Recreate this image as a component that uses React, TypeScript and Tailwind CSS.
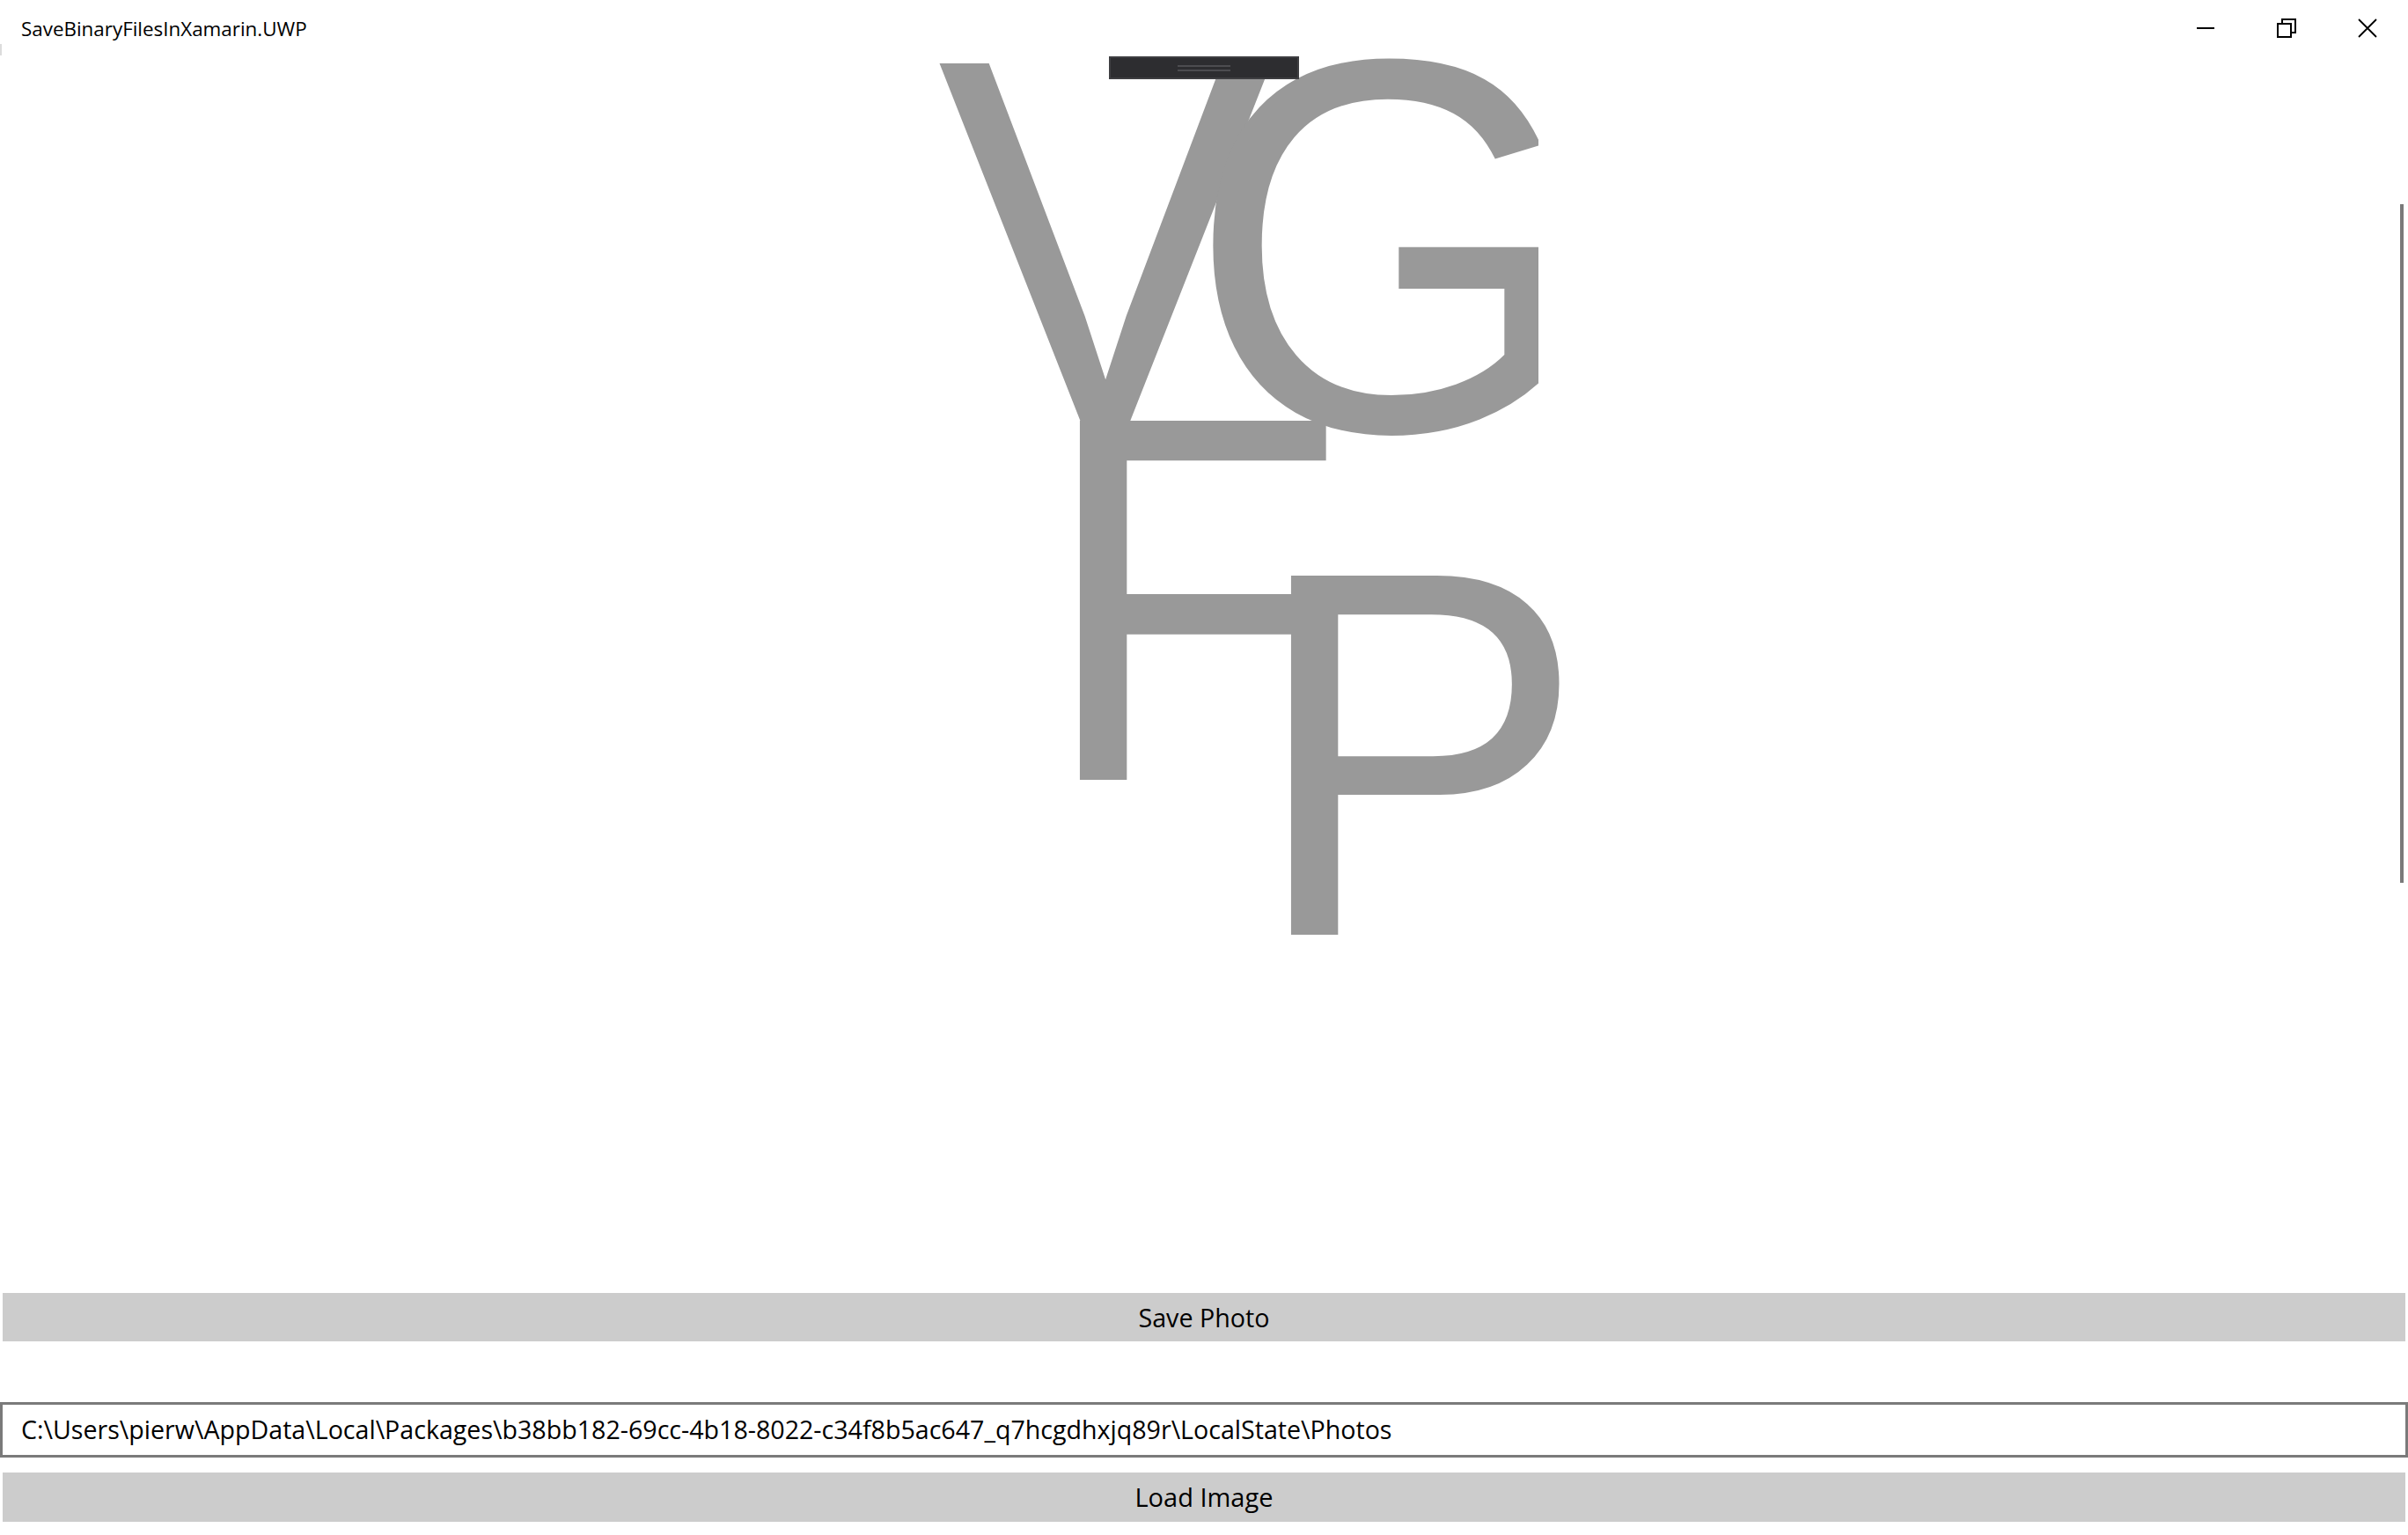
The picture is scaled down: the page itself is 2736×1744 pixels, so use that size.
import React from "react";

const path =
  "C:\\Users\\pierw\\AppData\\Local\\Packages\\b38bb182-69cc-4b18-8022-c34f8b5ac647_q7hcgdhxjq89r\\LocalState\\Photos";

const TitleBar: React.FC = () => (
  <div className="relative flex h-[56px] shrink-0 items-start">
    <span className="pl-[24px] pt-[19px] font-['Open_Sans',sans-serif] text-[22.4px] leading-[28px] text-black">
      SaveBinaryFilesInXamarin.UWP
    </span>
    <div className="absolute left-0 top-[50px] h-[13px] w-[2px] bg-[#dcdcdc]" />
    <div className="ml-auto flex h-[56px] pt-[7px]">
      <div className="flex w-[92px] items-center justify-center">
        <div className="h-[2px] w-[20px] bg-black" />
      </div>
      <div className="flex w-[92px] items-center justify-center">
        <svg width="22" height="22" viewBox="0 0 22 22" fill="none" stroke="black" strokeWidth="2">
          <rect x="1" y="6" width="15" height="15" />
          <path d="M6 6 V1 H21 V16 H16" />
        </svg>
      </div>
      <div className="flex w-[92px] items-center justify-center">
        <svg width="22" height="22" viewBox="0 0 22 22" fill="none" stroke="black" strokeWidth="1.8">
          <path d="M1 1 L21 21 M21 1 L1 21" />
        </svg>
      </div>
    </div>
  </div>
);

// the saved photo: big grey letters scattered on the canvas
const Letters: React.FC = () => (
  <>
    <span className="absolute left-[1065px] top-[-22px] origin-left scale-x-[0.965] font-['Liberation_Sans',sans-serif] text-[593px] leading-none text-[#999999]">V</span>
    <div className="absolute left-[1349px] top-[-23px] h-[620px] w-[399px] overflow-hidden">
      <span className="block origin-left scale-x-[0.965] font-['Liberation_Sans',sans-serif] text-[605px] leading-none text-[#999999]">G</span>
    </div>
    <span className="absolute left-[1180px] top-[384px] origin-left scale-x-[0.965] font-['Liberation_Sans',sans-serif] text-[593px] leading-none text-[#999999]">F</span>
    <span className="absolute left-[1420px] top-[560px] origin-left scale-x-[0.965] font-['Liberation_Sans',sans-serif] text-[593px] leading-none text-[#999999]">P</span>
    <div className="absolute left-[1260px] top-[64px] flex h-[26px] w-[216px] flex-col items-center justify-center gap-[3px] border-2 border-[#3e3e41] bg-[#2d2d30]">
      <div className="h-[2px] w-[60px] bg-[#4c4c50]" />
      <div className="h-[2px] w-[60px] bg-[#4c4c50]" />
    </div>
    <div className="absolute left-[2727px] top-[232px] h-[771px] w-[4px] bg-[#7a7a7a]" />
  </>
);

export default function App() {
  return (
    <div className="relative flex h-[1744px] w-[2736px] flex-col overflow-hidden bg-white font-['Open_Sans',sans-serif] text-black">
      <TitleBar />
      <div className="relative flex-1" />
      <Letters />
      <button className="mx-[3px] flex h-[55px] shrink-0 items-center justify-center bg-[#cccccc] text-[28.7px] text-black">
        Save Photo
      </button>
      <div className="h-[69px] shrink-0" />
      <div className="flex h-[63px] shrink-0 items-center border-[3px] border-[#7a7a7a] bg-white pl-[21px] text-[28.6px] text-black">
        {path}
      </div>
      <button className="mx-[3px] mt-[17px] flex h-[56px] shrink-0 items-center justify-center bg-[#cccccc] text-[29px] text-black">
        Load Image
      </button>
      <div className="h-[15px] shrink-0" />
    </div>
  );
}
